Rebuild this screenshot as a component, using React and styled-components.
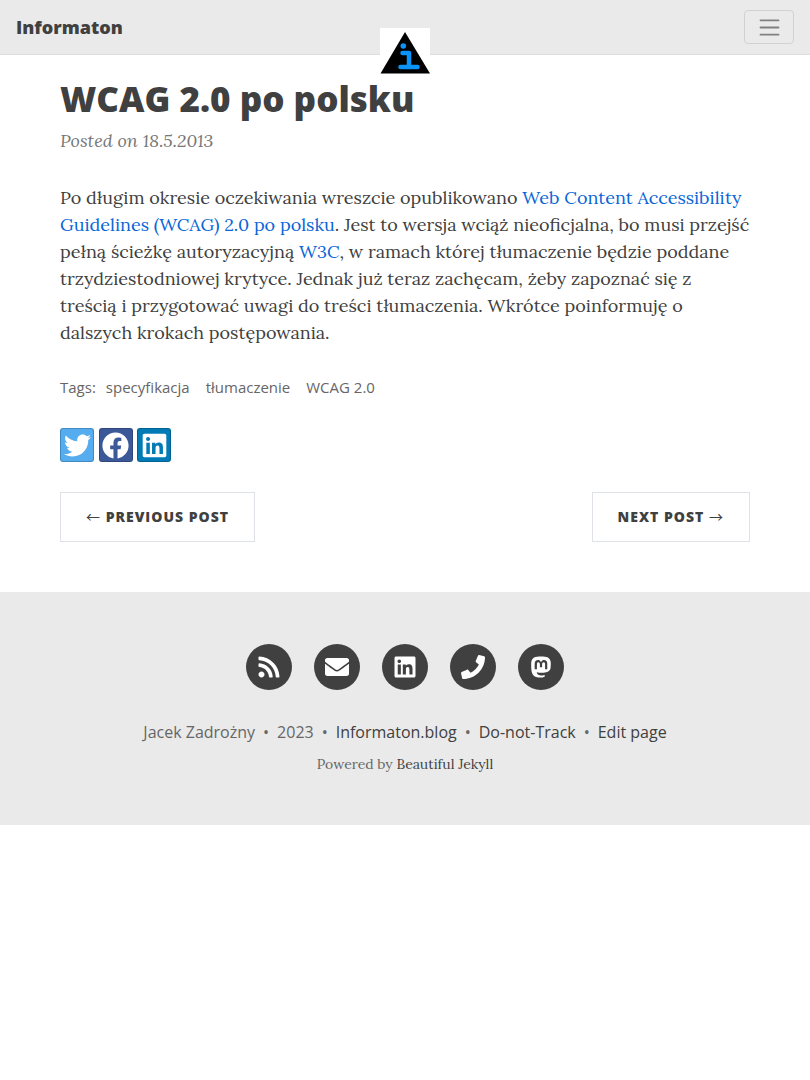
import React from "react";
import styled, { createGlobalStyle } from "styled-components";
import {
  FaTwitter,
  FaFacebook,
  FaLinkedin,
  FaRss,
  FaEnvelope,
  FaPhone,
  FaMastodon,
} from "react-icons/fa";

const sans = `"Open Sans", "Helvetica Neue", Arial, sans-serif`;
const serif = `Lora, "Liberation Serif", "Times New Roman", serif`;

const GlobalStyle = createGlobalStyle`
  *, *::before, *::after { box-sizing: border-box; }
  body {
    margin: 0;
    background: #fff;
    color: #404040;
    font-family: ${serif};
    font-size: 18px;
    line-height: 27px;
  }
  a { color: #0a66d8; text-decoration: none; }
`;

const Navbar = styled.nav`
  position: relative;
  display: flex;
  align-items: center;
  justify-content: space-between;
  padding: 10px 16px;
  background: #eaeaea;
  border-bottom: 1px solid #dddddd;
  font-family: ${sans};
`;

const Brand = styled.a`
  color: #404040;
  font-size: 18px;
  font-weight: 800;
  line-height: 34px;
`;

const Toggler = styled.button`
  display: flex;
  align-items: center;
  justify-content: center;
  width: 50px;
  height: 34px;
  padding: 0;
  background: transparent;
  border: 1px solid #d1d1d1;
  border-radius: 4px;
  color: #808080;
`;

const AvatarLink = styled.a`
  position: absolute;
  top: 28px;
  left: 50%;
  width: 50px;
  height: 50px;
  margin-left: -25px;
  svg { display: block; }
`;

const Main = styled.main`
  max-width: 730px;
  margin: 0 auto;
  padding: 23px 20px 50px;
`;

const Title = styled.h1`
  margin: 0;
  font-family: ${sans};
  font-size: 35px;
  font-weight: 800;
  line-height: 42px;
`;

const PostMeta = styled.p`
  margin: 7px 0 0;
  color: #777777;
  font-style: italic;
`;

const Body = styled.p`
  margin: 30px 0;
`;

const Tags = styled.div`
  display: flex;
  color: #666666;
  font-family: ${sans};
  font-size: 15px;
  line-height: 22px;
`;

const TagLabel = styled.span`
  margin-right: 10px;
`;

const Tag = styled.a`
  margin-right: 16px;
  color: inherit;
`;

const Share = styled.section`
  margin: 30px 0;
  font-family: ${sans};
  font-size: 18px;
  line-height: 34px;
`;

const ShareLink = styled.a`
  display: inline-flex;
  align-items: center;
  justify-content: center;
  width: 34px;
  height: 34px;
  vertical-align: top;
  color: #fff;
  background: ${(p) => p.$color};
  border: 1px solid rgba(0, 0, 0, 0.2);
  border-radius: 3px;
`;

const Pager = styled.div`
  display: flex;
  justify-content: space-between;
`;

const PagerLink = styled.a`
  padding: 0 25px;
  background: #fff;
  border: 1px solid #dee2e6;
  color: #404040;
  font-family: ${sans};
  font-size: 14px;
  font-weight: 800;
  letter-spacing: 1px;
  line-height: 48px;
  text-transform: uppercase;
`;

const Arrow = styled.span`
  font-family: "Noto Sans CJK JP", sans-serif;
  font-weight: 400;
  line-height: 1;
`;

const Footer = styled.footer`
  padding: 50px 20px;
  background: #eaeaea;
  color: #777777;
  text-align: center;
`;

const SocialList = styled.ul`
  display: flex;
  justify-content: center;
  gap: 22px;
  margin: 0 0 26px;
  padding: 2px 0 0;
  list-style: none;
`;

const SocialLink = styled.a`
  display: flex;
  align-items: center;
  justify-content: center;
  width: 46px;
  height: 46px;
  border-radius: 50%;
  background: #404040;
  color: #fff;
`;

const Copyright = styled.p`
  margin: 0;
  color: #666666;
  font-family: ${sans};
  font-size: 16px;
  line-height: 32px;
  a { color: #404040; }
`;

const Dot = styled.span`
  margin: 0 8px;
`;

const Theme = styled.p`
  margin: 6px 0 0;
  color: #666666;
  font-size: 14px;
  line-height: 21px;
  a { color: #404040; }
`;

const shares = [
  ["Twitter", "#55acee", FaTwitter],
  ["Facebook", "#3b5998", FaFacebook],
  ["LinkedIn", "#007bb6", FaLinkedin],
];

const socials = [
  ["RSS", FaRss],
  ["Email", FaEnvelope],
  ["LinkedIn", FaLinkedin],
  ["Phone", FaPhone],
  ["Mastodon", FaMastodon],
];

export default function App() {
  return (
    <>
      <GlobalStyle />
      <Navbar>
        <Brand href="#">Informaton</Brand>
        <Toggler type="button" aria-label="Toggle navigation">
          <svg width="27" height="27" viewBox="0 0 30 30" aria-hidden="true">
            <path
              d="M5 7h20M5 15h20M5 23h20"
              stroke="currentColor"
              strokeWidth="2"
              strokeLinecap="round"
            />
          </svg>
        </Toggler>
        <AvatarLink href="#" aria-label="Home">
          <svg width="50" height="50" viewBox="0 0 50 50" aria-hidden="true">
            <path d="M0 0h50v50H0z" fill="#fff" />
            <path d="M25 4L50 45.500H0.500z" fill="#000" />
            <circle cx="23.300" cy="18" r="2.800" fill="#0b93f8" />
            <path
              d="M22.500 25h6.500v14M20.500 39h17"
              fill="none"
              stroke="#0b93f8"
              strokeWidth="4.500"
              strokeLinecap="round"
              strokeLinejoin="round"
            />
          </svg>
        </AvatarLink>
      </Navbar>
      <Main>
        <Title>WCAG 2.0 po polsku</Title>
        <PostMeta>Posted on 18.5.2013</PostMeta>
        <Body>
          Po długim okresie oczekiwania wreszcie opublikowano{" "}
          <a href="#">
            Web Content Accessibility Guidelines (WCAG) 2.0 po polsku
          </a>
          . Jest to wersja wciąż nieoficjalna, bo musi przejść pełną ścieżkę
          autoryzacyjną <a href="#">W3C</a>, w ramach której tłumaczenie będzie
          poddane trzydziestodniowej krytyce. Jednak już teraz zachęcam, żeby
          zapoznać się z treścią i przygotować uwagi do treści tłumaczenia.
          Wkrótce poinformuję o dalszych krokach postępowania.
        </Body>
        <Tags>
          <TagLabel>Tags:</TagLabel>
          <Tag href="#">specyfikacja</Tag>
          <Tag href="#">tłumaczenie</Tag>
          <Tag href="#">WCAG 2.0</Tag>
        </Tags>
        <Share aria-label="Share">
          {shares.map(([name, color, Icon]) => (
            <React.Fragment key={name}>
              <ShareLink href="#" $color={color} aria-label={name}>
                <Icon size={27} />
              </ShareLink>{" "}
            </React.Fragment>
          ))}
        </Share>
        <Pager>
          <PagerLink href="#">
            <Arrow>←</Arrow> Previous Post
          </PagerLink>
          <PagerLink href="#">
            Next Post <Arrow>→</Arrow>
          </PagerLink>
        </Pager>
      </Main>
      <Footer>
        <SocialList>
          {socials.map(([name, Icon]) => (
            <li key={name}>
              <SocialLink href="#" aria-label={name}>
                <Icon size={24} />
              </SocialLink>
            </li>
          ))}
        </SocialList>
        <Copyright>
          Jacek Zadrożny<Dot>•</Dot>2023<Dot>•</Dot>
          <a href="#">Informaton.blog</a>
          <Dot>•</Dot>
          <a href="#">Do-not-Track</a>
          <Dot>•</Dot>
          <a href="#">Edit page</a>
        </Copyright>
        <Theme>
          Powered by <a href="#">Beautiful Jekyll</a>
        </Theme>
      </Footer>
    </>
  );
}
